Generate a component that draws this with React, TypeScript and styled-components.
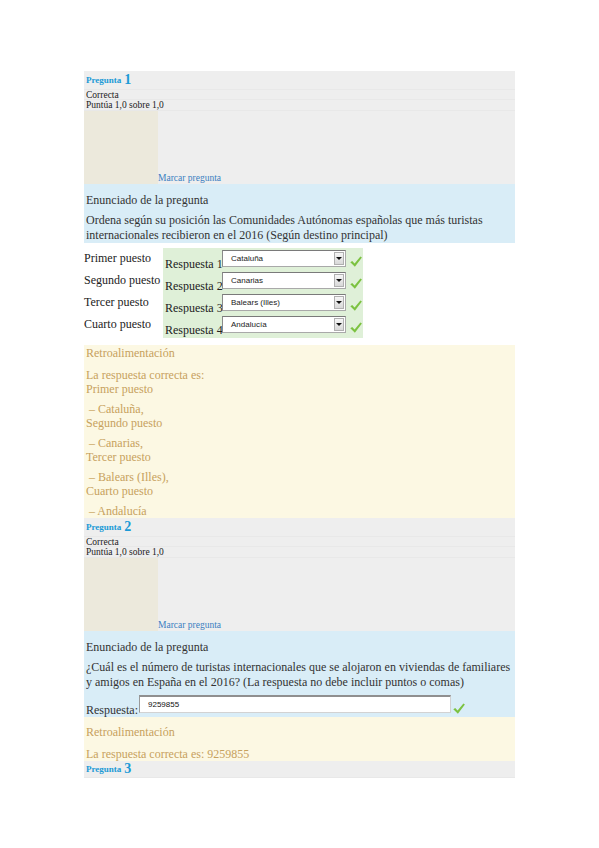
import React from "react";
import styled, { createGlobalStyle } from "styled-components";

const Global = createGlobalStyle`
  html, body { margin: 0; padding: 0; background: #ffffff; }
  body { font-family: "Liberation Serif", "Times New Roman", serif; color: #222; }
`;

const Page = styled.div`
  width: 431px;
  margin: 71px 0 60px 84px;
  display: flex;
  flex-direction: column;
`;

/* ---------- question info header ---------- */
const Info = styled.div`
  background: #eeeeee;
  display: flex;
  flex-direction: column;
`;

const InfoRow = styled.div<{ $h: number }>`
  height: ${(p) => p.$h}px;
  box-sizing: border-box;
  border-bottom: 1px solid #e8e8e8;
  padding-left: 2px;
  display: flex;
  align-items: center;
  font-size: 9.5px;
  line-height: 10px;
  color: #222;
`;

const QLabel = styled.span`
  font-weight: bold;
  font-size: 9px;
  color: #1b9ad6;
`;

const QNum = styled.span`
  font-weight: bold;
  font-size: 14px;
  color: #1b9ad6;
  margin-left: 3px;
`;

const FlagRow = styled.div`
  height: 73px;
  display: flex;
  align-items: flex-end;
`;

const FlagBox = styled.div`
  width: 74px;
  height: 100%;
  background: #ece9dc;
`;

const FlagLink = styled.a`
  font-size: 9.5px;
  line-height: 10px;
  color: #3a7fc1;
  text-decoration: none;
  margin-bottom: 1px;
`;

/* ---------- formulation ---------- */
const Formulation = styled.div`
  background: #d9edf7;
  padding: 9px 2px 0 2px;
  color: #333;
  font-size: 12px;
`;

const Title = styled.div`
  line-height: 14px;
`;

const Para = styled.div`
  margin-top: 6px;
  line-height: 15px;
  white-space: nowrap;
`;

/* ---------- matching table ---------- */
const Match = styled.div`
  padding-top: 5px;
  display: flex;
  flex-direction: column;
  font-size: 12px;
  color: #222;
`;

const MatchRow = styled.div<{ $h: number }>`
  height: ${(p) => p.$h}px;
  display: flex;
`;

const Stem = styled.div`
  width: 79px;
  flex: none;
  padding-top: 3px;
  line-height: 14px;
  white-space: nowrap;
`;

const Cell = styled.div`
  width: 200px;
  flex: none;
  background: #dff0d8;
  display: flex;
  align-items: flex-start;
  padding-left: 2px;
  box-sizing: border-box;
`;

const CellLabel = styled.span`
  flex: none;
  width: 57px;
  padding-top: 10px;
  line-height: 12px;
  white-space: nowrap;
`;

const Select = styled.div`
  flex: none;
  margin-top: 2px;
  width: 124px;
  height: 17px;
  box-sizing: border-box;
  background: #ffffff;
  border: 1px solid #a9a9a9;
  border-top-color: #7a7a7a;
  border-left-color: #8a8a8a;
  display: flex;
  align-items: center;
  justify-content: space-between;
  font-family: "Liberation Sans", Arial, sans-serif;
  font-size: 8px;
  color: #222;
`;

const SelectText = styled.span`
  padding-left: 8px;
`;

const Arrow = styled.span`
  width: 10px;
  height: 13px;
  margin-right: 1px;
  box-sizing: border-box;
  border: 1px solid #b0b0b0;
  background: linear-gradient(#f6f6f6, #d8d8d8);
  display: flex;
  align-items: center;
  justify-content: center;
`;

const Tri = styled.span`
  width: 0;
  height: 0;
  border-left: 3px solid transparent;
  border-right: 3px solid transparent;
  border-top: 3px solid #111;
`;

const CheckWrap = styled.span<{ $top: number; $left: number; $bottom?: number }>`
  flex: none;
  margin-left: ${(p) => p.$left}px;
  margin-top: ${(p) => p.$top}px;
  margin-bottom: ${(p) => p.$bottom ?? 0}px;
  display: flex;
`;

/* ---------- short answer ---------- */
const AnswerRow = styled.div`
  margin-top: 5px;
  display: flex;
  align-items: flex-end;
`;

const AnswerLabel = styled.span`
  flex: none;
  line-height: 14px;
  margin-right: 1px;
  white-space: nowrap;
`;

const Input = styled.div`
  flex: none;
  width: 312px;
  height: 18px;
  margin-bottom: 4px;
  box-sizing: border-box;
  background: #ffffff;
  border: 1px solid #d2d2d2;
  border-top: 2px solid #8f8f8f;
  border-left-color: #9a9a9a;
  display: flex;
  align-items: center;
  padding-left: 8px;
  font-family: "Liberation Sans", Arial, sans-serif;
  font-size: 8px;
  color: #111;
`;

/* ---------- feedback ---------- */
const Feedback = styled.div<{ $pt: number; $mt?: number }>`
  background: #fcf8e3;
  margin-top: ${(p) => p.$mt ?? 0}px;
  padding: ${(p) => p.$pt}px 2px 0 2px;
  color: #c7a15d;
  font-size: 12px;
  line-height: 14px;
`;

const FbTitle = styled.div``;

const FbPara = styled.div<{ $mt: number }>`
  margin-top: ${(p) => p.$mt}px;
  white-space: nowrap;
`;

const Check: React.FC = () => (
  <svg width="12" height="11" viewBox="0 0 12 11">
    <path
      d="M0.3 6.3 L2.2 4.9 L4.6 7.4 L10.4 0.4 L11.9 1.6 L4.9 10.8 Z"
      fill="#7cc241"
    />
  </svg>
);

const Header: React.FC<{ n: number; full?: boolean }> = ({ n, full = true }) => (
  <Info>
    <InfoRow $h={full ? 19 : 17}>
      <QLabel>Pregunta</QLabel>
      <QNum>{n}</QNum>
    </InfoRow>
    {full && (
      <>
        <InfoRow $h={10}>Correcta</InfoRow>
        <InfoRow $h={11}>Puntúa 1,0 sobre 1,0</InfoRow>
        <FlagRow>
          <FlagBox />
          <FlagLink href="#">Marcar pregunta</FlagLink>
        </FlagRow>
      </>
    )}
  </Info>
);

const matches = [
  { stem: "Primer puesto", answer: "Cataluña" },
  { stem: "Segundo puesto", answer: "Canarias" },
  { stem: "Tercer puesto", answer: "Balears (Illes)" },
  { stem: "Cuarto puesto", answer: "Andalucía" },
];

export default function App() {
  return (
    <>
      <Global />
      <Page>
        <Header n={1} />
        <Formulation>
          <Title>Enunciado de la pregunta</Title>
          <Para>
            Ordena según su posición las Comunidades Autónomas españolas que más turistas
            <br />
            internacionales recibieron en el 2016 (Según destino principal)
          </Para>
        </Formulation>
        <Match>
          {matches.map((m, i) => (
            <MatchRow key={m.stem} $h={i === 3 ? 24 : 22}>
              <Stem>{m.stem}</Stem>
              <Cell>
                <CellLabel>Respuesta {i + 1}</CellLabel>
                <Select>
                  <SelectText>{m.answer}</SelectText>
                  <Arrow>
                    <Tri />
                  </Arrow>
                </Select>
                <CheckWrap $top={8} $left={4}>
                  <Check />
                </CheckWrap>
              </Cell>
            </MatchRow>
          ))}
        </Match>
        <Feedback $pt={1} $mt={7}>
          <FbTitle>Retroalimentación</FbTitle>
          <FbPara $mt={8}>
            La respuesta correcta es:
            <br />
            Primer puesto
          </FbPara>
          <FbPara $mt={6}>
            &nbsp;– Cataluña,
            <br />
            Segundo puesto
          </FbPara>
          <FbPara $mt={6}>
            &nbsp;– Canarias,
            <br />
            Tercer puesto
          </FbPara>
          <FbPara $mt={6}>
            &nbsp;– Balears (Illes),
            <br />
            Cuarto puesto
          </FbPara>
          <FbPara $mt={6}>&nbsp;– Andalucía</FbPara>
        </Feedback>

        <Header n={2} />
        <Formulation>
          <Title>Enunciado de la pregunta</Title>
          <Para>
            ¿Cuál es el número de turistas internacionales que se alojaron en viviendas de familiares
            <br />
            y amigos en España en el 2016? (La respuesta no debe incluir puntos o comas)
          </Para>
          <AnswerRow>
            <AnswerLabel>Respuesta:</AnswerLabel>
            <Input>9259855</Input>
            <CheckWrap $top={0} $left={2} $bottom={3}>
              <Check />
            </CheckWrap>
          </AnswerRow>
        </Formulation>
        <Feedback $pt={8}>
          <FbTitle>Retroalimentación</FbTitle>
          <FbPara $mt={8}>La respuesta correcta es: 9259855</FbPara>
        </Feedback>
        <Header n={3} full={false} />
      </Page>
    </>
  );
}
